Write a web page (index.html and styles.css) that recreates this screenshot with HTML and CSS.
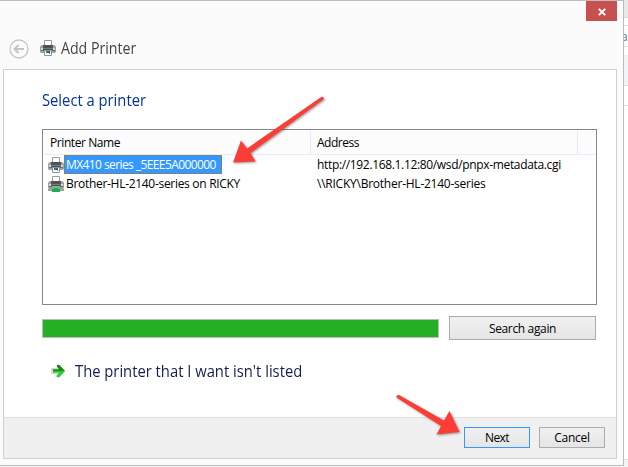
FILE: index.html
```html
<!DOCTYPE html>
<html lang="en">
<head>
<meta charset="utf-8">
<title>Add Printer</title>
<link rel="stylesheet" href="styles.css">
</head>
<body>
<svg class="defs" width="0" height="0">
  <symbol id="printer" viewBox="0 0 16 16">
    <path d="M4.500 6V.5h7V6" fill="#fff" stroke="#999"/>
    <path d="M2 5h12l2 1.500V12l-1 1H1l-1-1V6.500z" fill="#a0a2a1"/>
    <path d="M3 5h10v5H3z" fill="#505352"/>
    <path d="M1 8h2v2H1zM13 8h2v2h-2z" fill="#d5d9d7"/>
    <path d="M3 8h10v1H3z" fill="#777a79"/>
    <path d="M1 10h14v1H1z" fill="#666968"/>
    <path d="M13 7h1.500v1H13z" fill="#6fd08a"/>
    <path d="M4.500 10.500h7v5h-7z" fill="#fff" stroke="#929494"/>
    <path d="M6 11h2v2H6z" fill="#187da8"/><path d="M8 11h2v2H8z" fill="#2459a8"/><path d="M9 13h1v1H9z" fill="#44aa82"/>
  </symbol>
</svg>
<div class="screen">
  <main class="window">
    <div class="titlebar">
      <button class="close" aria-label="Close"><svg width="8" height="8" viewBox="0 0 8 8"><path d="M.8.8l6.400 6.400M7.200.8L.8 7.200" stroke="#fff" stroke-width="1.900"/></svg></button>
    </div>
    <header class="heading">
      <svg class="back" width="20" height="20" viewBox="0 0 20 20" fill="none" stroke="#c3c3c3"><circle cx="10" cy="10" r="9" stroke-width="1.300"/><path d="M15 10H6M9.500 6L5.500 10l4 4" stroke-width="2"/></svg>
      <svg class="title-icon" width="16" height="16"><use href="#printer"/></svg>
      <h1><span class="t-title">Add Printer</span></h1>
    </header>
    <section class="panel">
      <div class="content">
        <h2><span class="t-select">Select a printer</span></h2>
        <div class="list">
          <div class="columns"><div class="col name"><span class="t-name">Printer Name</span></div><div class="col address"><span class="t-address">Address</span></div></div>
          <div class="row">
            <svg width="16" height="16"><use href="#printer"/></svg>
            <div class="label"><span class="selected"><span class="t-mx">MX410 series _5EEE5A000000</span></span></div>
            <span class="t-url">http://192.168.1.12:80/wsd/pnpx-metadata.cgi</span>
          </div>
          <div class="row">
            <svg width="16" height="16"><use href="#printer"/><path d="M4 10h8v1H4z" fill="#a0a2a1"/><path d="M5 11h6v2H5z" fill="#55cf80"/><path d="M0 13h16v2H0z" fill="#8fa79a"/><path d="M6 12h4v1h2v3H4v-3h2z" fill="#25a951"/></svg>
            <div class="label"><span class="plain"><span class="t-brother">Brother-HL-2140-series on RICKY</span></span></div>
            <span class="t-path">\\RICKY\Brother-HL-2140-series</span>
          </div>
        </div>
        <div class="search"><div class="progress"></div><button class="btn wide"><span class="t-again">Search again</span></button></div>
        <div class="missing">
          <svg width="16" height="14" viewBox="0 0 16 14"><defs><linearGradient id="green" x1="0" y1="0" x2="0" y2="1"><stop offset=".45" stop-color="#168b0c"/><stop offset=".55" stop-color="#29d038"/></linearGradient></defs><path class="glow" d="M0 4h6L5 2l2.500-2L14 7l-6 7-4-1 2-3H0z" fill="#d5d5d5"/><path d="M2 5.200H8L6 2.500V1h2.500L14 7l-5.500 6H6v-1.500L8 8.800H2z" fill="url(#green)"/></svg>
          <span class="t-missing">The printer that I want isn't listed</span>
        </div>
      </div>
      <footer><button class="btn next"><span class="t-next">Next</span></button><button class="btn"><span class="t-cancel">Cancel</span></button></footer>
    </section>
  </main>
  <aside class="behind"><div class="strip s1"></div><div class="strip s2"></div><div class="strip s3">a</div><div class="strip s4"></div><div class="strip s5"></div><div class="strip s6"></div><div class="strip s7"></div></aside>
</div>
<svg class="arrows" width="628" height="467" fill="#fb3d36">
  <path d="M320.500 97.500q2.500-2 3.500 1.500L250.500 153l5 8.500L233 162.500l8-22 6 8z"/>
  <path d="M396.500 397.500q-.5-3 2.500-2.500L444 420.500l5.500-9.500L459.500 432l-23 2.500 4.500-8.500z"/>
</svg>
</body>
</html>
```

FILE: styles.css
```css
* { box-sizing: border-box; }
body { margin: 0; width: 628px; height: 467px; overflow: hidden; background: #f4f4f4; font: 12px "Open Sans", "Noto Sans", sans-serif; color: #000; }
svg { display: block; flex: none; }
.defs { position: absolute; }
h1, h2 { margin: 0; font-weight: 400; }
span { white-space: nowrap; }
button { font: inherit; color: inherit; padding: 0; margin: 0; }
.screen { display: flex; height: 467px; }
.window { width: 624px; height: 466px; background: #fbfbfb; border: solid #bdbdbd; border-width: 1px 1px 1px 0; flex: none; }
.titlebar { display: flex; justify-content: flex-end; height: 20px; padding-right: 6px; }
.close { width: 31px; height: 20px; border: 0; background: #c75050; display: flex; align-items: center; justify-content: center; padding-top: 1px; }
.heading { display: flex; align-items: center; height: 48px; padding: 7px 0 0 9px; }
.title-icon { margin: -2px 5px 0 11px; }
h1 { font-size: 16px; line-height: 20px; color: #444; margin-top: -1px; }
.t-title, .t-select, .t-missing { display: inline-block; transform-origin: left center; }
.t-title { transform: scaleX(.885); }
.t-select { transform: scaleX(.922); }
.t-missing { transform: scaleX(.923); }
.panel { width: 614px; height: 390px; margin-left: 3px; background: #fff; border: 1px solid #d0d0d0; }
.content { height: 347px; padding: 19px 0 0 38px; }
h2 { font-size: 16px; line-height: 22px; color: #003399; margin-bottom: 18px; }
.list { width: 555px; height: 176px; border: 1px solid #828790; padding: 1px; }
.columns { display: flex; height: 24px; width: 551px; background: #fcfcfc; border-bottom: 1px solid #e3edfa; }
.col { border-right: 1px solid #e3edfa; line-height: 24px; padding-left: 6px; }
.name { width: 267px; }
.address { width: 267px; }
.t-name { letter-spacing: -.42px; }
.t-address { letter-spacing: -.5px; }
.t-mx { letter-spacing: -.59px; }
.t-brother { letter-spacing: -.3px; }
.t-url { letter-spacing: -.34px; }
.t-path { letter-spacing: -.24px; }
.t-again { letter-spacing: -.35px; }
.t-next { letter-spacing: -.6px; }
.t-cancel { letter-spacing: -.3px; }
.row { display: flex; align-items: center; height: 19px; padding-left: 4px; line-height: 19px; }
.label { width: 253px; }
.selected, .plain { display: block; height: 19px; padding-left: 2px; line-height: 19px; }
.selected { width: 158px; background: #3399ff; color: #fff; border: 1px dotted #cc6600; padding-left: 1px; line-height: 17px; }
.search { display: flex; align-items: center; margin-top: 11px; gap: 10px; }
.progress { width: 397px; height: 19px; background: #26b026; border: 1px solid #bcbcbc; }
.btn { width: 66px; height: 21px; border: 1px solid #acacac; background: linear-gradient(#f0f0f0, #e5e5e5); display: flex; align-items: center; justify-content: center; }
.wide { width: 147px; height: 24px; }
.next { border-color: #3399ff; }
.missing { display: flex; align-items: center; height: 22px; margin-top: 20px; padding-left: 9px; gap: 8px; font-size: 16px; color: #151c55; }
.glow { filter: blur(.7px); }
footer { height: 41px; background: #f0f0f0; border-top: 1px solid #dfdfdf; display: flex; justify-content: flex-end; padding: 9px 11px 0 0; gap: 9px; }
.behind { width: 4px; overflow: hidden; }
.strip { border-bottom: 1px solid #dedede; background: #fff; }
.s1 { height: 18px; background: #e8e8e8; }
.s2 { height: 8px; }
.s3 { height: 21px; font: 12px/21px "Open Sans", sans-serif; color: #777; text-indent: -3px; }
.s4 { height: 8px; border: 0; }
.s5 { height: 31px; background: #f2f3f5; }
.s6 { height: 20px; }
.s7 { height: 354px; }
.arrows { position: absolute; inset: 0; pointer-events: none; filter: drop-shadow(1px 1px 1px rgba(0,0,0,.4)); }
```
